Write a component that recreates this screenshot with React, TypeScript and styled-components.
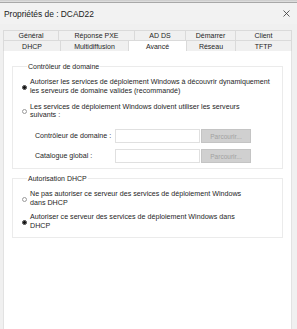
import React from "react";
import styled, { createGlobalStyle } from "styled-components";

const Global = createGlobalStyle`
  html, body { margin: 0; padding: 0; background: #f0f0f0; }
  body { font-family: "Liberation Sans", Arial, sans-serif; }
  * { box-sizing: border-box; }
`;

const Window = styled.div`
  width: 297px;
  height: 329px;
  display: flex;
  flex-direction: column;
  background: #f0f0f0;
  color: #1e1e1e;
  overflow: hidden;
`;

const TopStrip = styled.div`
  height: 3px;
  background: linear-gradient(to bottom, #c8c8c8 0, #e4e4e4 2px);
  border-bottom: 1px solid #a8a8a8;
`;

const TitleBar = styled.div`
  height: 21px;
  display: flex;
  align-items: center;
  justify-content: space-between;
  padding: 0 7px 0 4px;
  background: #f2f2f2;
`;

const Title = styled.span`
  font-size: 8.4px;
  color: #1a1a1a;
`;

const TabArea = styled.div`
  margin: 6px 5px 0 3px;
  display: flex;
  flex-direction: column;
`;

const TabRow = styled.div<{ $cols: string; $h: number }>`
  display: grid;
  grid-template-columns: ${(p) => p.$cols};
  height: ${(p) => p.$h}px;
`;

const Tab = styled.div<{ $active?: boolean }>`
  display: flex;
  align-items: center;
  justify-content: center;
  font-size: 7px;
  color: #1e1e1e;
  background: ${(p) => (p.$active ? "#ffffff" : "#f0f0f0")};
  border-top: 1px solid #dadada;
  border-left: 1px solid #dadada;
  &:last-child { border-right: 1px solid #dadada; }
`;

const Panel = styled.div`
  flex: 1;
  margin: 0 5px 0 3px;
  background: #ffffff;
  border-left: 1px solid #e2e2e2;
  border-right: 1px solid #e2e2e2;
  padding: 11px 8px 0 8px;
  display: flex;
  flex-direction: column;
`;

const Group = styled.fieldset<{ $pb: number; $mt: number }>`
  margin: ${(p) => p.$mt}px 0 0 0;
  border: 1px solid #ebebeb;
  padding: 7px 8px ${(p) => p.$pb}px 9px;
  min-width: 0;
`;

const Legend = styled.legend`
  font-size: 7px;
  line-height: 9px;
  padding: 0 1px;
  margin-left: 5px;
  color: #1e1e1e;
`;

const Options = styled.div<{ $gap: number }>`
  display: flex;
  flex-direction: column;
  gap: ${(p) => p.$gap}px;
`;

const Option = styled.div`
  display: flex;
  align-items: center;
  gap: 3px;
`;

const Radio = styled.span<{ $checked?: boolean }>`
  flex: none;
  width: 5px;
  height: 5px;
  border-radius: 50%;
  border: 1px solid ${(p) => (p.$checked ? "#333" : "#9a9a9a")};
  background: ${(p) => (p.$checked ? "radial-gradient(circle, #111 0 1.3px, #fff 1.6px)" : "#fff")};
  margin-top: 1px;
`;

const OptionText = styled.span`
  font-size: 7.15px;
  line-height: 8.8px;
  color: #1e1e1e;
`;

const Fields = styled.div`
  display: flex;
  flex-direction: column;
  gap: 6px;
  margin-top: 9px;
  padding-left: 13px;
`;

const FieldRow = styled.div`
  display: flex;
  align-items: center;
`;

const FieldLabel = styled.span`
  width: 80px;
  font-size: 7.1px;
  color: #1e1e1e;
`;

const Input = styled.div`
  width: 85px;
  height: 14px;
  border: 1px solid #e0e0e0;
  background: #fff;
`;

const BrowseButton = styled.div`
  margin-left: 1px;
  width: 50px;
  height: 14px;
  background: #d0d0d0;
  border: 1px solid #c4c4c4;
  color: #a2a2a2;
  font-size: 6.5px;
  display: flex;
  align-items: center;
  justify-content: center;
`;

const CloseIcon = () => (
  <svg width="7" height="7" viewBox="0 0 7 7">
    <path d="M0.5 0.5 L6.5 6.5 M6.5 0.5 L0.5 6.5" stroke="#333" strokeWidth="0.8" fill="none" />
  </svg>
);

export default function App() {
  return (
    <>
      <Global />
      <Window>
        <TopStrip />
        <TitleBar>
          <Title>Propriétés de : DCAD22</Title>
          <CloseIcon />
        </TitleBar>
        <TabArea>
          <TabRow $cols="55px 76px 51px 50px 57px" $h={10}>
            <Tab>Général</Tab>
            <Tab>Réponse PXE</Tab>
            <Tab>AD DS</Tab>
            <Tab>Démarrer</Tab>
            <Tab>Client</Tab>
          </TabRow>
          <TabRow $cols="57px 68px 58px 49px 57px" $h={11}>
            <Tab>DHCP</Tab>
            <Tab>Multidiffusion</Tab>
            <Tab $active>Avancé</Tab>
            <Tab>Réseau</Tab>
            <Tab>TFTP</Tab>
          </TabRow>
        </TabArea>
        <Panel>
          <Group $mt={0} $pb={5}>
            <Legend>Contrôleur de domaine</Legend>
            <Options $gap={7}>
              <Option>
                <Radio $checked />
                <OptionText>
                  Autoriser les services de déploiement Windows à découvrir dynamiquement
                  <br />
                  les serveurs de domaine valides (recommandé)
                </OptionText>
              </Option>
              <Option>
                <Radio />
                <OptionText>
                  Les services de déploiement Windows doivent utiliser les serveurs
                  <br />
                  suivants :
                </OptionText>
              </Option>
            </Options>
            <Fields>
              <FieldRow>
                <FieldLabel>Contrôleur de domaine :</FieldLabel>
                <Input />
                <BrowseButton>Parcourir...</BrowseButton>
              </FieldRow>
              <FieldRow>
                <FieldLabel>Catalogue global :</FieldLabel>
                <Input />
                <BrowseButton>Parcourir...</BrowseButton>
              </FieldRow>
            </Fields>
          </Group>
          <Group $mt={5} $pb={7}>
            <Legend>Autorisation DHCP</Legend>
            <Options $gap={5}>
              <Option>
                <Radio />
                <OptionText>
                  Ne pas autoriser ce serveur des services de déploiement Windows
                  <br />
                  dans DHCP
                </OptionText>
              </Option>
              <Option>
                <Radio $checked />
                <OptionText>
                  Autoriser ce serveur des services de déploiement Windows dans
                  <br />
                  DHCP
                </OptionText>
              </Option>
            </Options>
          </Group>
        </Panel>
      </Window>
    </>
  );
}
